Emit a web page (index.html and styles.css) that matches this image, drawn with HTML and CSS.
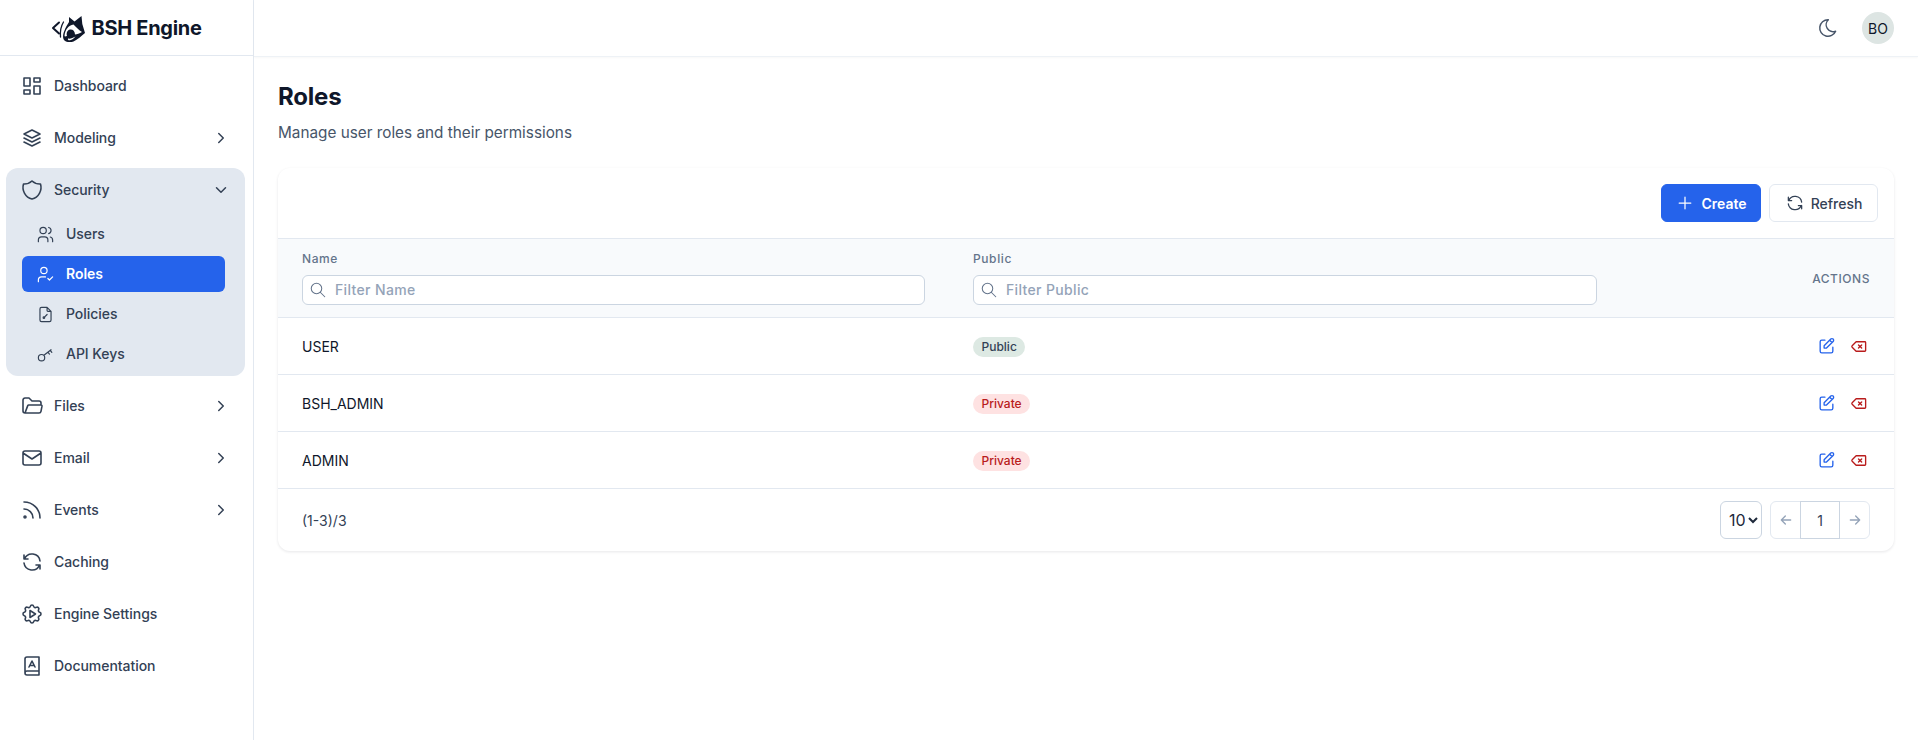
FILE: index.html
```html
<!DOCTYPE html>
<html lang="en">
<head>
<meta charset="utf-8">
<title>Roles - BSH Engine</title>
<link rel="stylesheet" href="styles.css">
</head>
<body>
<svg class="sprite" xmlns="http://www.w3.org/2000/svg">
  <symbol id="i-dash" viewBox="0 0 24 24"><path d="M4 4h6v8h-6z M4 16h6v4h-6z M14 12h6v8h-6z M14 4h6v4h-6z"/></symbol>
  <symbol id="i-stack" viewBox="0 0 24 24"><path d="M12 4l-8 4l8 4l8 -4l-8 -4 M4 12l8 4l8 -4 M4 16l8 4l8 -4"/></symbol>
  <symbol id="i-shield" viewBox="0 0 24 24"><path d="M12 3a12 12 0 0 0 8.5 3a12 12 0 0 1 -8.5 15a12 12 0 0 1 -8.5 -15a12 12 0 0 0 8.5 -3"/></symbol>
  <symbol id="i-users" viewBox="0 0 24 24"><path d="M5 7a4 4 0 1 0 8 0a4 4 0 1 0 -8 0 M3 21v-2a4 4 0 0 1 4 -4h4a4 4 0 0 1 4 4v2 M16 3.13a4 4 0 0 1 0 7.75 M21 21v-2a4 4 0 0 0 -3 -3.85"/></symbol>
  <symbol id="i-ucheck" viewBox="0 0 24 24"><path d="M6 7a4 4 0 1 0 8 0a4 4 0 0 0 -8 0 M3 21v-2a4 4 0 0 1 4 -4h5 M15 17l2 2l4 -4"/></symbol>
  <symbol id="i-policy" viewBox="0 0 24 24"><path d="M14 3v4a1 1 0 0 0 1 1h4 M17 21h-10a2 2 0 0 1 -2 -2v-14a2 2 0 0 1 2 -2h7l5 5v11a2 2 0 0 1 -2 2z M9 16a1 1 0 1 0 2 0a1 1 0 1 0 -2 0 M11 15l3 -3"/></symbol>
  <symbol id="i-key" viewBox="0 0 24 24"><path d="M3 16a4 4 0 1 0 8 0a4 4 0 1 0 -8 0 M10 13l9 -7 M15 9l2 2.5 M18 6.800l2 2.500"/></symbol>
  <symbol id="i-folder" viewBox="0 0 24 24"><path d="M5 19l2.757 -7.351a1 1 0 0 1 .936 -.649h12.307a1 1 0 0 1 .986 1.164l-.996 5.211a2 2 0 0 1 -1.964 1.625h-14.026a2 2 0 0 1 -2 -2v-11a2 2 0 0 1 2 -2h4l3 3h7a2 2 0 0 1 2 2v2"/></symbol>
  <symbol id="i-mail" viewBox="0 0 24 24"><path d="M3 7a2 2 0 0 1 2 -2h14a2 2 0 0 1 2 2v10a2 2 0 0 1 -2 2h-14a2 2 0 0 1 -2 -2v-10z M3 7l9 6l9 -6"/></symbol>
  <symbol id="i-rss" viewBox="0 0 24 24"><path d="M4 19a1 1 0 1 0 2 0a1 1 0 1 0 -2 0 M4 4a16 16 0 0 1 16 16 M4 11a9 9 0 0 1 9 9"/></symbol>
  <symbol id="i-refresh" viewBox="0 0 24 24"><path d="M20 11a8.100 8.100 0 0 0 -15.500 -2m-.5 -4v4h4 M4 13a8.100 8.100 0 0 0 15.500 2m.5 4v-4h-4"/></symbol>
  <symbol id="i-gear" viewBox="0 0 24 24"><path d="M10.325 4.317c.426 -1.756 2.924 -1.756 3.35 0a1.724 1.724 0 0 0 2.573 1.066c1.543 -.94 3.31 .826 2.37 2.37a1.724 1.724 0 0 0 1.065 2.572c1.756 .426 1.756 2.924 0 3.35a1.724 1.724 0 0 0 -1.066 2.573c.94 1.543 -.826 3.31 -2.37 2.37a1.724 1.724 0 0 0 -2.572 1.065c-.426 1.756 -2.924 1.756 -3.35 0a1.724 1.724 0 0 0 -2.573 -1.066c-1.543 .94 -3.31 -.826 -2.37 -2.37a1.724 1.724 0 0 0 -1.065 -2.572c-1.756 -.426 -1.756 -2.924 0 -3.35a1.724 1.724 0 0 0 1.066 -2.573c-.94 -1.543 .826 -3.31 2.37 -2.37c1 .608 2.296 .07 2.572 -1.065z M10 8.500v7l5.500 -3.500z"/></symbol>
  <symbol id="i-book" viewBox="0 0 24 24"><path d="M19 3v18h-12a2 2 0 0 1 -2 -2v-14a2 2 0 0 1 2 -2h12z M19 17h-12a2 2 0 0 0 -2 2 M9 13l3 -6l3 6 M10 11.500h4"/></symbol>
  <symbol id="i-right" viewBox="0 0 24 24"><path d="M9 6l6 6l-6 6"/></symbol>
  <symbol id="i-down" viewBox="0 0 24 24"><path d="M6 9l6 6l6 -6"/></symbol>
  <symbol id="i-moon" viewBox="0 0 24 24"><path d="M12 3c.132 0 .263 0 .393 0a7.500 7.500 0 0 0 7.920 12.446a9 9 0 1 1 -8.313 -12.454z"/></symbol>
  <symbol id="i-plus" viewBox="0 0 24 24"><path d="M12 5v14 M5 12h14"/></symbol>
  <symbol id="i-search" viewBox="0 0 24 24"><path d="M3 10a7 7 0 1 0 14 0a7 7 0 1 0 -14 0 M21 21l-6 -6"/></symbol>
  <symbol id="i-edit" viewBox="0 0 24 24"><path d="M10 4h-4a2 2 0 0 0 -2 2v12a2 2 0 0 0 2 2h12a2 2 0 0 0 2 -2v-5 M20.385 5.585a2.100 2.100 0 0 0 -2.970 -2.970l-8.415 8.385v3h3l8.385 -8.415z M16 4l3 3"/></symbol>
  <symbol id="i-del" viewBox="0 0 24 24"><path d="M20 6a1 1 0 0 1 1 1v10a1 1 0 0 1 -1 1h-11l-5 -5a1.500 1.500 0 0 1 0 -2l5 -5z M12 10l4 4m0 -4l-4 4"/></symbol>
  <symbol id="i-aleft" viewBox="0 0 24 24"><path d="M5 12h14 M5 12l6 6 M5 12l6 -6"/></symbol>
  <symbol id="i-aright" viewBox="0 0 24 24"><path d="M5 12h14 M13 18l6 -6 M13 6l6 6"/></symbol>
</svg>

<div class="app">
  <aside class="sidebar">
    <div class="brand">
      <svg class="logo" viewBox="0 0 34 28" xmlns="http://www.w3.org/2000/svg">
        <path class="logo-line" d="M8 8.500L2 14l6 5.500"/>
        <path class="logo-line thin" d="M12.500 8c-2.500 4-3.500 9-3 15"/>
        <path class="logo-head" d="M18 3l5.500 4.500L30.500 2l.8 8 2.700 9c-3.500 3-7.500 6.500-11.500 8.500-3 1.200-7 .8-9-1-2-2-1.800-6 0-10 1-3 3-6 4.500-8.500z"/>
        <path class="logo-mask" d="M13.500 22c.5-6 4-11 9-11.500 2.500 2.800 5.500 5.500 8.500 7.500-2.500 1.500-5 2.200-7 2.500 0-3.500-2.500-5.500-5-5-2.500.5-4 3.500-3 6.500-1.500.5-2.500 .5-2.500 0z"/>
        <path class="logo-mask" d="M17 24.500c2 .5 5-.5 7.500-2-1.500 2-3.500 3.200-5.500 3.700-1.500 .3-2.500 -.5-2 -1.700z"/>
      </svg>
      <span class="brand-name">BSH Engine</span>
    </div>
    <nav class="nav">
      <a class="item"><svg class="ico"><use href="#i-dash"/></svg><span>Dashboard</span></a>
      <a class="item"><svg class="ico"><use href="#i-stack"/></svg><span>Modeling</span><svg class="chev"><use href="#i-right"/></svg></a>
      <div class="group">
        <a class="item"><svg class="ico"><use href="#i-shield"/></svg><span>Security</span><svg class="chev"><use href="#i-down"/></svg></a>
        <div class="sub-list">
          <a class="sub"><svg class="sub-ico"><use href="#i-users"/></svg><span>Users</span></a>
          <a class="sub active"><svg class="sub-ico"><use href="#i-ucheck"/></svg><span>Roles</span></a>
          <a class="sub"><svg class="sub-ico"><use href="#i-policy"/></svg><span>Policies</span></a>
          <a class="sub"><svg class="sub-ico"><use href="#i-key"/></svg><span>API Keys</span></a>
        </div>
      </div>
      <a class="item"><svg class="ico"><use href="#i-folder"/></svg><span>Files</span><svg class="chev"><use href="#i-right"/></svg></a>
      <a class="item"><svg class="ico"><use href="#i-mail"/></svg><span>Email</span><svg class="chev"><use href="#i-right"/></svg></a>
      <a class="item"><svg class="ico"><use href="#i-rss"/></svg><span>Events</span><svg class="chev"><use href="#i-right"/></svg></a>
      <a class="item"><svg class="ico"><use href="#i-refresh"/></svg><span>Caching</span></a>
      <a class="item"><svg class="ico"><use href="#i-gear"/></svg><span>Engine Settings</span></a>
      <a class="item"><svg class="ico"><use href="#i-book"/></svg><span>Documentation</span></a>
    </nav>
  </aside>

  <div class="content">
    <header class="topbar">
      <svg class="moon"><use href="#i-moon"/></svg>
      <div class="avatar">BO</div>
    </header>
    <main class="main">
      <h1 class="title">Roles</h1>
      <p class="subtitle">Manage user roles and their permissions</p>

      <section class="card">
        <div class="toolbar">
          <button class="btn btn-primary"><svg class="btn-ico"><use href="#i-plus"/></svg>Create</button>
          <button class="btn btn-plain"><svg class="btn-ico"><use href="#i-refresh"/></svg>Refresh</button>
        </div>
        <table class="table">
          <colgroup><col class="col-name"><col class="col-public"><col></colgroup>
          <thead>
            <tr>
              <th>
                <div class="th-label">Name</div>
                <div class="filter"><svg class="filter-ico"><use href="#i-search"/></svg><input placeholder="Filter Name"></div>
              </th>
              <th>
                <div class="th-label">Public</div>
                <div class="filter"><svg class="filter-ico"><use href="#i-search"/></svg><input placeholder="Filter Public"></div>
              </th>
              <th class="th-actions">ACTIONS</th>
            </tr>
          </thead>
          <tbody>
            <tr>
              <td>USER</td>
              <td><span class="tag tag-public">Public</span></td>
              <td><div class="acts"><svg class="act act-edit"><use href="#i-edit"/></svg><svg class="act act-del"><use href="#i-del"/></svg></div></td>
            </tr>
            <tr>
              <td>BSH_ADMIN</td>
              <td><span class="tag tag-private">Private</span></td>
              <td><div class="acts"><svg class="act act-edit"><use href="#i-edit"/></svg><svg class="act act-del"><use href="#i-del"/></svg></div></td>
            </tr>
            <tr>
              <td>ADMIN</td>
              <td><span class="tag tag-private">Private</span></td>
              <td><div class="acts"><svg class="act act-edit"><use href="#i-edit"/></svg><svg class="act act-del"><use href="#i-del"/></svg></div></td>
            </tr>
          </tbody>
        </table>
        <div class="footer">
          <span class="range">(1-3)/3</span>
          <div class="pager">
            <select class="size"><option>10</option></select>
            <div class="pages">
              <span class="pg"><svg class="pg-ico"><use href="#i-aleft"/></svg></span>
              <span class="pg pg-cur">1</span>
              <span class="pg"><svg class="pg-ico"><use href="#i-aright"/></svg></span>
            </div>
          </div>
        </div>
      </section>
    </main>
  </div>
</div>
</body>
</html>
```

FILE: styles.css
```css
* { box-sizing: border-box; }
html, body { margin: 0; height: 100%; }
body { font-family: Inter, "Liberation Sans", sans-serif; color: #0f172a; background: #fff; overflow: hidden; }
.sprite { display: none; }
svg { fill: none; stroke: currentColor; stroke-linecap: round; stroke-linejoin: round; stroke-width: 2; flex: none; }

.app { display: flex; height: 740px; }

.sidebar { width: 254px; flex: none; border-right: 1px solid #e2e8f0; background: #fff; }
.brand { height: 56px; border-bottom: 1px solid #e2e8f0; display: flex; align-items: center; justify-content: center; gap: 6px; }
.logo { width: 34px; height: 28px; stroke: none; }
.logo-line { stroke: #0f172a; stroke-width: 2; fill: none; }
.logo-line.thin { stroke-width: 1.3; }
.logo-head { fill: #0f172a; stroke: none; }
.logo-mask { fill: #fff; stroke: none; }
.brand-name { font-size: 20px; font-weight: 700; color: #0f172a; letter-spacing: -0.3px; }

.nav { display: flex; flex-direction: column; gap: 8px; padding: 8px 0 0 6px; width: 245px; }
.item { height: 44px; display: flex; align-items: center; padding: 0 15px 0 14px; gap: 10px; font-size: 14px; line-height: 17px; font-weight: 500; color: #334155; letter-spacing: -0.05px; }
.item span { flex: 1; padding-bottom: 1px; }
.ico { width: 24px; height: 24px; stroke-width: 1.6; }
.chev { width: 18px; height: 18px; stroke-width: 2; }
.group { background: #e2e8f0; border-radius: 12px; padding-bottom: 4px; }
.sub-list { display: flex; flex-direction: column; padding: 4px 0 0 16px; gap: 4px; }
.sub { width: 203px; height: 36px; border-radius: 6px; display: flex; align-items: center; gap: 11px; padding: 0 13px; font-size: 14px; line-height: 17px; font-weight: 500; color: #334155; letter-spacing: -0.05px; }
.sub span { padding-bottom: 1px; }
.sub-ico { width: 19px; height: 19px; stroke-width: 1.5; margin-left: 1px; }
.sub.active { background: #2563eb; color: #fff; font-weight: 600; }

.content { flex: 1; min-width: 0; display: flex; flex-direction: column; }
.topbar { height: 57px; flex: none; border-bottom: 1px solid #eef2f6; display: flex; align-items: center; justify-content: flex-end; padding: 0 24px 0 0; gap: 23px; box-shadow: 0 1px 2px rgba(15, 23, 42, 0.03); }
.moon { width: 22px; height: 22px; stroke-width: 1.6; color: #475569; }
.avatar { width: 32px; height: 32px; border-radius: 50%; background: #dde5e3; display: flex; align-items: center; justify-content: center; font-size: 14px; color: #0f172a; }

.main { padding: 24px 24px 0; }
.title { margin: 0; font-size: 24px; line-height: 32px; font-weight: 700; color: #0f172a; letter-spacing: -0.2px; }
.subtitle { margin: 8px 0 0; font-size: 15.3px; line-height: 24px; color: #475569; }

.card { margin-top: 23px; border-radius: 12px; background: #fff; box-shadow: 0 1px 3px rgba(15, 23, 42, 0.1); overflow: hidden; }
.toolbar { height: 70px; display: flex; align-items: center; justify-content: flex-end; gap: 8px; padding: 0 16px; }
.btn { height: 38px; border-radius: 6px; display: inline-flex; align-items: center; justify-content: center; gap: 6px; font: 600 14px Inter, "Liberation Sans", sans-serif; padding: 0; }
.btn-primary { width: 100px; background: #2563eb; border: 1px solid #2563eb; color: #fff; }
.btn-plain { width: 109px; background: #fff; border: 1px solid #e2e8f0; color: #334155; font-weight: 500; }
.btn-ico { width: 20px; height: 20px; stroke-width: 1.5; }

.table { width: 100%; border-collapse: collapse; table-layout: fixed; font-size: 14px; }
.col-name { width: 671px; }
.col-public { width: 672px; }
.table thead tr { background: #f8fafc; border-top: 1px solid #e2e8f0; border-bottom: 1px solid #e2e8f0; }
.table th { height: 79px; padding: 12px 24px 0; text-align: left; font-weight: 500; vertical-align: top; }
.th-label { font-size: 12px; line-height: 16px; color: #64748b; letter-spacing: 0.6px; }
.table .th-actions { text-align: right; vertical-align: middle; padding: 0 24px 0 0; font-size: 12px; letter-spacing: 0.55px; color: #64748b; }
.filter { margin-top: 8px; height: 30px; border: 1px solid #cbd5e1; border-radius: 6px; background: #fff; display: flex; align-items: center; padding-left: 6px; gap: 8px; }
.filter-ico { width: 18px; height: 18px; stroke-width: 1.4; color: #64748b; }
.filter input { flex: 1; min-width: 0; border: 0; outline: 0; background: transparent; padding: 0 0 1px; font: 500 14px Inter, "Liberation Sans", sans-serif; letter-spacing: 0.35px; color: #0f172a; }
.filter input::placeholder { color: #94a3b8; opacity: 1; }
.table tbody tr { border-bottom: 1px solid #e2e8f0; }
.table td { height: 57px; padding: 0 24px; color: #0f172a; }
.tag { display: inline-block; height: 20px; line-height: 20px; padding: 0 8.5px; margin-top: 2px; border-radius: 10px; font-size: 12px; font-weight: 500; vertical-align: middle; }
.tag-public { background: #dde9e3; color: #334155; }
.tag-private { background: #fee2e2; color: #b91c1c; }
.acts { display: flex; justify-content: flex-end; gap: 13px; margin-right: 2px; }
.act { width: 19px; height: 19px; stroke-width: 1.7; }
.act-edit { color: #2563eb; }
.act-del { color: #b91c1c; }

.footer { height: 62px; display: flex; align-items: center; justify-content: space-between; padding: 0 24px; font-size: 14px; color: #334155; }
.pager { display: flex; align-items: center; gap: 8px; }
.size { width: 42px; height: 38px; border: 1px solid #cbd5e1; border-radius: 6px; background: #fff; font: 400 16px Inter, "Liberation Sans", sans-serif; color: #1e293b; padding: 0 0 0 4px; }
.pages { display: flex; width: 100px; height: 38px; border: 1px solid #e2e8f0; border-radius: 6px; }
.pg { flex: 1; display: flex; align-items: center; justify-content: center; color: #94a3b8; }
.pg-ico { width: 16px; height: 16px; }
.pg-cur { flex: none; width: 40px; height: 38px; margin: -1px 0; border: 1px solid #cbd5e1; color: #334155; font-size: 14px; }
```
